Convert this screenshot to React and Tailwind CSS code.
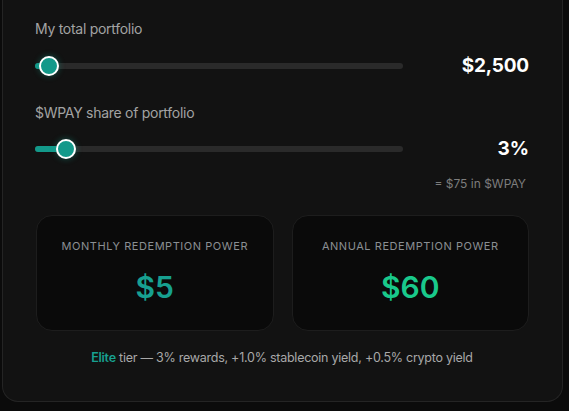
import React, { useState } from "react";

function Slider({ percent }) {
  return (
    <div className="relative h-[6px] w-[368px] rounded-full bg-[#2a2a2a]">
      <div
        className="absolute left-0 top-0 h-full rounded-full bg-[#13998a]"
        style={{ width: `${percent}%` }}
      />
      <div
        className="absolute top-1/2 h-[20px] w-[20px] -translate-x-1/2 -translate-y-1/2 rounded-full border-2 border-white bg-[#13998a] shadow-[0_0_6px_rgba(20,160,140,0.45)]"
        style={{ left: `${percent}%` }}
      />
    </div>
  );
}

function StatCard({ label, value, color }) {
  return (
    <div className="flex h-[116px] flex-1 flex-col items-center rounded-2xl border border-[#1d1d1d] bg-[#0a0a0a] pt-[22px]">
      <div className="text-[11px] leading-4 tracking-[0.05em] text-[#8a8f93] uppercase">
        {label}
      </div>
      <div className={`mt-[15px] text-[30px] font-semibold leading-9 ${color}`}>
        {value}
      </div>
    </div>
  );
}

export default function App() {
  const [portfolio] = useState(2500);
  const [share] = useState(3);

  return (
    <div
      className="min-h-[411px] bg-[#0b0b0b] pl-[2px] pr-[6px]"
      style={{ fontFamily: "Inter, 'Noto Sans', sans-serif" }}
    >
      <div className="rounded-b-2xl border border-t-0 border-[#242424] bg-[#121212] pl-[32px] pr-[33px] pt-[19px] pb-[33px]">
        <div className="text-[14px] leading-5 tracking-[-0.02em] text-[#a3a3a3]">My total portfolio</div>
        <div className="mt-[13px] flex h-[28px] items-center justify-between">
          <Slider percent={3.8} />
          <div className="text-[19px] font-bold tracking-[-0.01em] text-white">${portfolio.toLocaleString("en-US")}</div>
        </div>

        <div className="mt-[23px] text-[14px] leading-5 tracking-[-0.02em] text-[#a3a3a3]">$WPAY share of portfolio</div>
        <div className="mt-[12px] flex h-[28px] items-center justify-between">
          <Slider percent={8.4} />
          <div className="text-[19px] font-bold text-white">{share}%</div>
        </div>
        <div className="mt-[13px] pr-[3px] text-right text-[12px] leading-4 text-[#7d7d7d]">
          = $75 in $WPAY
        </div>

        <div className="mt-[23px] flex gap-[18px] pl-[1px]">
          <StatCard label="Monthly Redemption Power" value="$5" color="text-[#17a090]" />
          <StatCard label="Annual Redemption Power" value="$60" color="text-[#19c98b]" />
        </div>

        <div className="mt-[17px] text-center text-[12.5px] leading-5 tracking-[-0.02em] text-[#a8a8a8]">
          <span className="font-semibold text-[#17a090]">Elite</span> tier — 3% rewards, +1.0% stablecoin yield, +0.5% crypto yield
        </div>
      </div>
    </div>
  );
}
